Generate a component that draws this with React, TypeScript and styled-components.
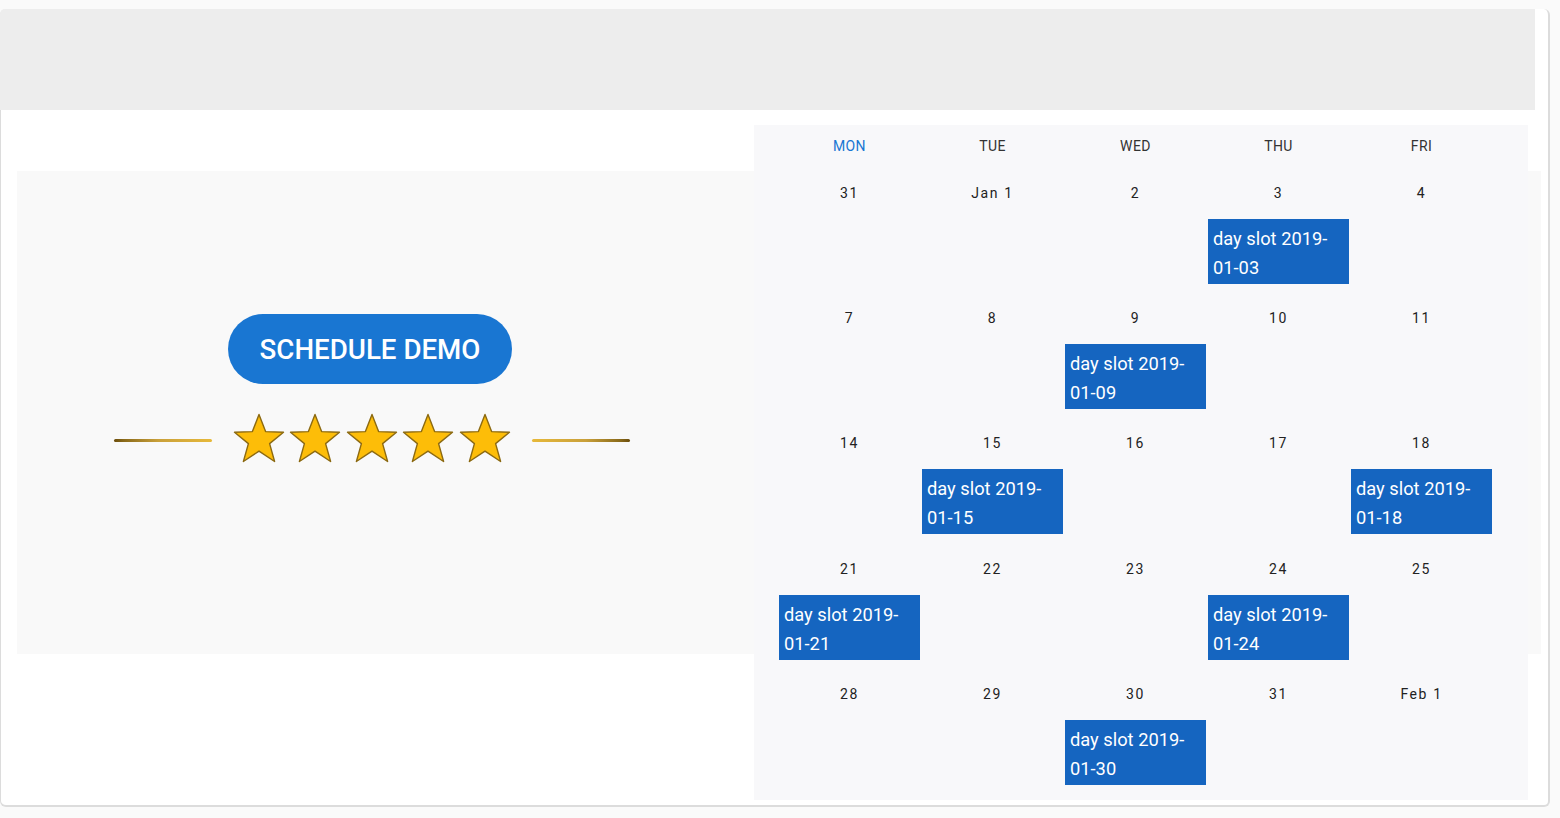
import React from "react";
import styled, { createGlobalStyle } from "styled-components";

const Global = createGlobalStyle`
  html, body { margin: 0; padding: 0; background: #fafafa; }
  body { font-family: Roboto, "Liberation Sans", Arial, sans-serif; }
  * { box-sizing: border-box; }
`;

const Page = styled.div`
  width: 1560px;
  height: 818px;
  padding-top: 9px;
  overflow: hidden;
`;

const Card = styled.div`
  width: 1550px;
  height: 798px;
  background: #ffffff;
  border: 1px solid #dcdcdc;
  border-top: none;
  border-right-width: 2px;
  border-bottom-width: 2px;
  border-radius: 6px;
`;

const Header = styled.div`
  width: 1535px;
  height: 101px;
  margin-left: -1px;
  background: #ededed;
  border-top-left-radius: 5px;
`;

const Section = styled.div`
  display: flex;
  height: 483px;
  margin: 61px 7px 0 16px;
  background: #f9f9f9;
`;

const LeftPanel = styled.div`
  flex: 0 0 737px;
  display: flex;
  flex-direction: column;
  align-items: center;
  padding: 143px 28px 0 0;
`;

const DemoButton = styled.button`
  width: 284px;
  height: 70px;
  margin-right: 3px;
  border: none;
  border-radius: 35px;
  background: #1976d2;
  color: #ffffff;
  font-family: Roboto, "Liberation Sans", Arial, sans-serif;
  font-size: 27.7px;
  font-weight: 500;
  cursor: pointer;
`;

const Rating = styled.div`
  display: flex;
  align-items: center;
  margin-top: 29px;
  gap: 21px;
`;

const Stars = styled.div`
  display: flex;
  gap: 4.5px;
`;

const Line = styled.div<{ $flip?: boolean }>`
  width: 98px;
  height: 3px;
  margin-top: 5px;
  border-radius: 2px;
  background: linear-gradient(
    ${(p) => (p.$flip ? "to left" : "to right")},
    #6b4d0c 0%,
    #8a6a1a 10%,
    #c9a03a 45%,
    #e7b93a 100%
  );
`;

const Calendar = styled.div`
  flex: 0 0 774px;
  height: 675px;
  margin-top: -46px;
  background: #f8f8fa;
  padding: 0 0 0 24px;
`;

const Grid = styled.div`
  display: grid;
  grid-template-columns: repeat(5, 143px);
  grid-template-rows: 46px repeat(5, 125.2px);
`;

const DayName = styled.div<{ $active?: boolean }>`
  display: flex;
  justify-content: center;
  padding-top: 13px;
  font-size: 14px;
  letter-spacing: 0.4px;
  color: ${(p) => (p.$active ? "#1976d2" : "#333333")};
`;

const Cell = styled.div`
  display: flex;
  flex-direction: column;
  align-items: center;
`;

const DateNum = styled.div`
  height: 48px;
  padding-top: 14px;
  font-size: 14px;
  letter-spacing: 1.6px;
  color: #222222;
`;

const Event = styled.div`
  align-self: stretch;
  margin: 0 1px;
  height: 65px;
  background: #1565c0;
  color: #ffffff;
  font-size: 18.3px;
  line-height: 29px;
  padding: 5px 5px 0;
  overflow: hidden;
`;

const Star = () => (
  <svg width="52" height="50" viewBox="0 0 52 50">
    <polygon
      points="26,1.5 32.6,18.6 50.5,19.2 36.6,30.6 41.6,48.5 26,38.2 10.4,48.5 15.4,30.6 1.5,19.2 19.4,18.6"
      fill="#fdbd08"
      stroke="#8c6a12"
      strokeWidth="1.4"
      strokeLinejoin="round"
    />
  </svg>
);

const days = ["MON", "TUE", "WED", "THU", "FRI"];
const weeks: { label: string; date?: string }[][] = [
  [{ label: "31" }, { label: "Jan 1" }, { label: "2" }, { label: "3", date: "2019-01-03" }, { label: "4" }],
  [{ label: "7" }, { label: "8" }, { label: "9", date: "2019-01-09" }, { label: "10" }, { label: "11" }],
  [{ label: "14" }, { label: "15", date: "2019-01-15" }, { label: "16" }, { label: "17" }, { label: "18", date: "2019-01-18" }],
  [{ label: "21", date: "2019-01-21" }, { label: "22" }, { label: "23" }, { label: "24", date: "2019-01-24" }, { label: "25" }],
  [{ label: "28" }, { label: "29" }, { label: "30", date: "2019-01-30" }, { label: "31" }, { label: "Feb 1" }],
];

export default function App() {
  return (
    <Page>
      <Global />
      <Card>
        <Header />
        <Section>
          <LeftPanel>
            <DemoButton>SCHEDULE DEMO</DemoButton>
            <Rating>
              <Line />
              <Stars>
                {[0, 1, 2, 3, 4].map((i) => (
                  <Star key={i} />
                ))}
              </Stars>
              <Line $flip />
            </Rating>
          </LeftPanel>
          <Calendar>
            <Grid>
              {days.map((d, i) => (
                <DayName key={d} $active={i === 0}>
                  {d}
                </DayName>
              ))}
              {weeks.flat().map((c, i) => (
                <Cell key={i}>
                  <DateNum>{c.label}</DateNum>
                  {c.date && <Event>day slot {c.date}</Event>}
                </Cell>
              ))}
            </Grid>
          </Calendar>
        </Section>
      </Card>
    </Page>
  );
}
